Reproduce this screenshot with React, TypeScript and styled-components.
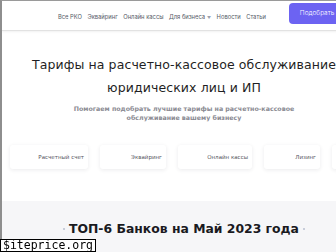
import styled, { createGlobalStyle } from "styled-components";

const GlobalStyle = createGlobalStyle`
	html, body {
		margin: 0;
		padding: 0;
		background: #ffffff;
		overflow: hidden;
	}
	body {
		width: 336px;
		height: 252px;
		border-top: 1px solid #9a9a9a;
		border-left: 2px solid #8e8e8e;
		box-sizing: border-box;
		font-family: "DejaVu Sans", "Open Sans", sans-serif;
	}
`;

const Page = styled.div`
	width: 364px;
`;

const Header = styled.header`
	display: flex;
	height: 30px;
	align-items: center;
	padding: 0 0 0 56px;
	border-bottom: 1px solid #e2e2e2;
	box-shadow: 0 1px 2px rgba(0, 0, 0, 0.06);
	box-sizing: border-box;
`;

const Nav = styled.nav`
	display: flex;
	gap: 5.5px;
	align-items: center;
	margin-top: 2px;
`;

const NavItem = styled.a`
	font-family: Inter, "Open Sans", sans-serif;
	font-size: 5.8px;
	color: #555a66;
	white-space: nowrap;
	text-decoration: none;
`;

const Caret = styled.span`
	display: inline-block;
	margin-left: 2px;
	font-size: 4px;
	color: #9aa0ad;
`;

const CtaButton = styled.button`
	margin-left: 23px;
	margin-top: -5px;
	width: 70px;
	height: 21px;
	border: none;
	border-radius: 4px;
	background: #6c63f2;
	color: #ffffff;
	font-family: Inter, "Open Sans", sans-serif;
	font-size: 6.5px;
	font-weight: 300;
	text-align: left;
	padding-left: 11px;
	white-space: nowrap;
`;

const Hero = styled.section`
	display: flex;
	flex-direction: column;
	align-items: center;
	padding-top: 22px;
	height: 170px;
	box-sizing: border-box;
`;

const Title = styled.h1`
	margin: 0;
	font-size: 12.5px;
	font-weight: 500;
	line-height: 23px;
	color: #1f1f24;
	text-align: center;
	letter-spacing: 0.1px;
`;

const Subtitle = styled.p`
	margin: 5px 0 0;
	width: 230px;
	font-size: 6.3px;
	font-weight: bold;
	line-height: 9px;
	color: #8a8a92;
	text-align: center;
`;

const Cards = styled.div`
	display: flex;
	gap: 12px;
	margin-top: 23px;
	align-self: flex-start;
	padding-left: 8px;
`;

const Card = styled.div<{ $w: number }>`
	display: flex;
	flex-shrink: 0;
	width: ${(p) => p.$w}px;
	height: 24px;
	align-items: center;
	justify-content: flex-end;
	padding-right: 4px;
	box-sizing: border-box;
	background: #ffffff;
	border-radius: 3px;
	box-shadow: 0 1px 4px rgba(30, 30, 60, 0.09);
	font-size: 5.5px;
	color: #55555e;
	white-space: nowrap;
`;

const TopSection = styled.section`
	display: flex;
	justify-content: center;
	align-items: center;
	height: 60px;
	background: #f6f6f8;
	padding-bottom: 5px;
	box-sizing: border-box;
	gap: 4px;
`;

const Dot = styled.span`
	width: 2px;
	height: 2px;
	border-radius: 50%;
	background: #b8bfd0;
`;

const TopTitle = styled.h2`
	margin: 0;
	font-size: 12.4px;
	font-weight: 600;
	color: #1a1a1f;
	white-space: nowrap;
`;

const Watermark = styled.div`
	position: fixed;
	left: 0;
	bottom: 0;
	padding: 0 2px;
	background: #ffffff;
	border: 1px solid #000000;
	font-family: "DejaVu Sans Mono", "Liberation Mono", monospace;
	font-size: 11.5px;
	line-height: 11px;
	color: #000000;
`;

// the fifth card only peeks in at the right edge
const cards = [
	{ label: "Расчетный счет", w: 78 },
	{ label: "Эквайринг", w: 66 },
	{ label: "Онлайн кассы", w: 74 },
	{ label: "Лизинг", w: 56 },
	{ label: "", w: 72 },
];

export default function App() {
	return (
		<>
			<GlobalStyle />
			<Page>
				<Header>
					<Nav>
						<NavItem>Все РКО</NavItem>
						<NavItem>Эквайринг</NavItem>
						<NavItem>Онлайн кассы</NavItem>
						<NavItem>
							Для бизнеса<Caret>▼</Caret>
						</NavItem>
						<NavItem>Новости</NavItem>
						<NavItem>Статьи</NavItem>
					</Nav>
					<CtaButton>Подобрать</CtaButton>
				</Header>
				<Hero>
					<Title>
						Тарифы на расчетно-кассовое обслуживание
						<br />
						юридических лиц и ИП
					</Title>
					<Subtitle>
						Помогаем подобрать лучшие тарифы на расчетно-кассовое обслуживание вашему бизнесу
					</Subtitle>
					<Cards>
						{cards.map((c, i) => (
							<Card key={i} $w={c.w}>
								{c.label}
							</Card>
						))}
					</Cards>
				</Hero>
				<TopSection>
					<Dot />
					<TopTitle>ТОП-6 Банков на Май 2023 года</TopTitle>
					<Dot />
				</TopSection>
			</Page>
			<Watermark>$iteprice.org</Watermark>
		</>
	);
}
